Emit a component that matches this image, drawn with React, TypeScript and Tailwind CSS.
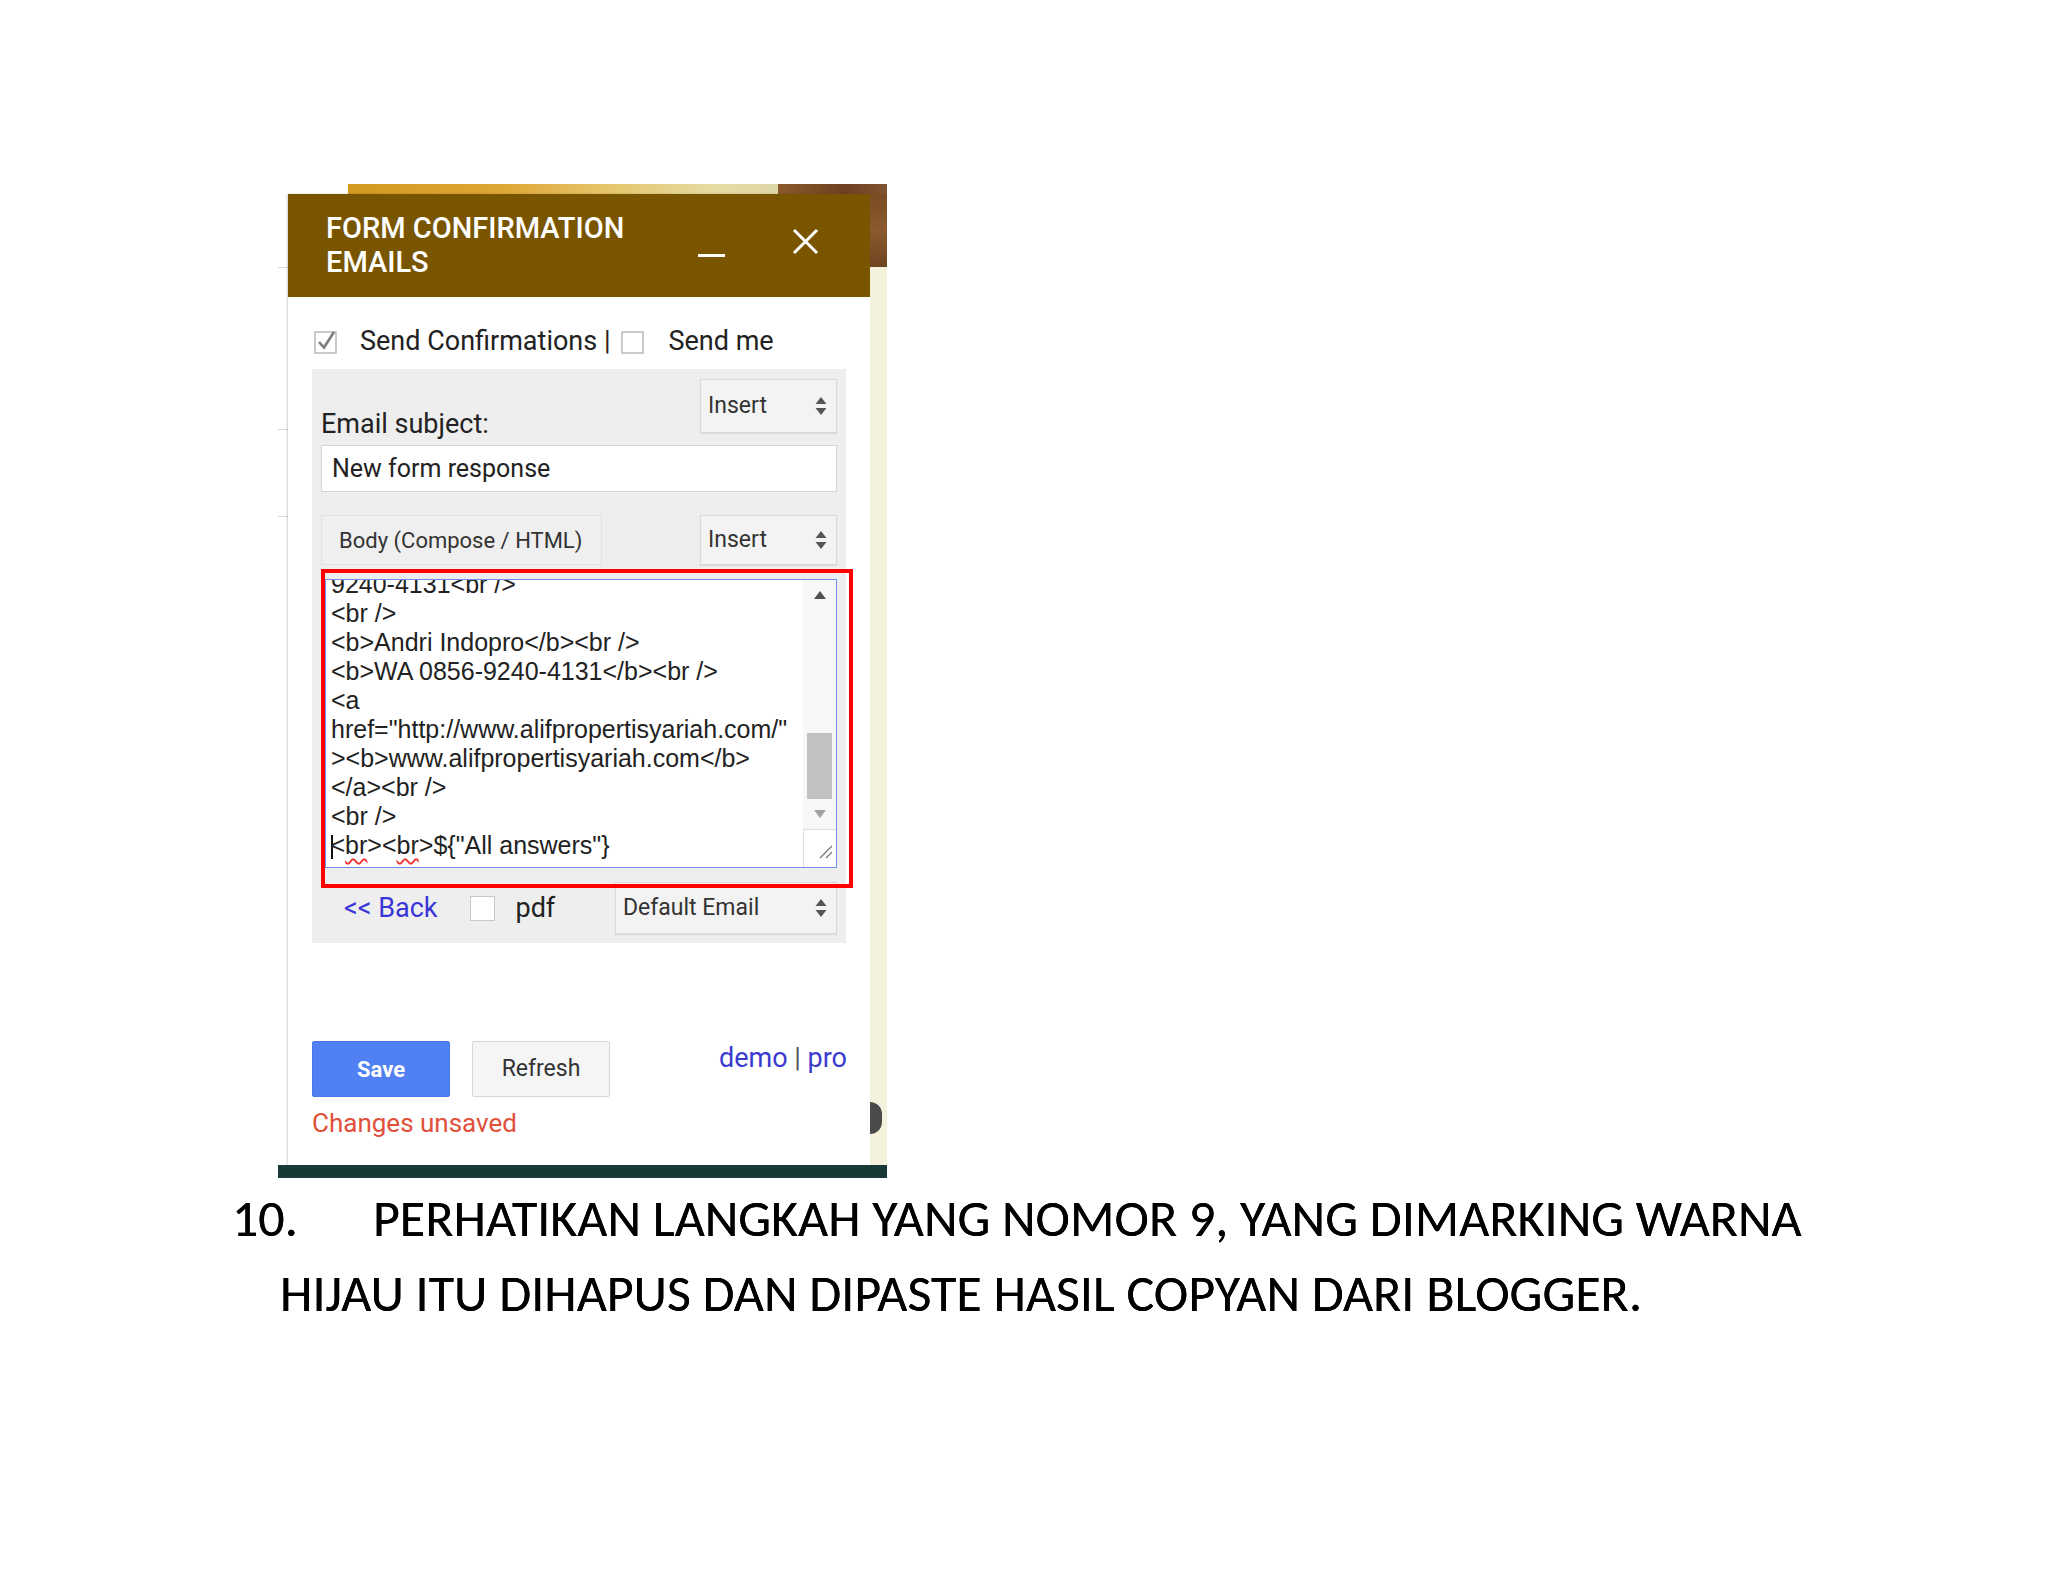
import React from "react";

function UpDown() {
  return (
    <svg width="12" height="22" viewBox="0 0 12 22" className="shrink-0">
      <path d="M6 2 L11.5 9 L0.5 9 Z" fill="#555" />
      <path d="M0.5 13 L11.5 13 L6 20 Z" fill="#555" />
    </svg>
  );
}

function Select({ label, className }: { label: string; className: string }) {
  return (
    <div
      className={`flex items-center justify-between border border-[#d9d9d9] bg-[#f3f3f3] pl-[7px] pr-[9px] text-[23px] text-[#333] shadow-[0_1px_1px_rgba(0,0,0,0.08)] ${className}`}
    >
      <span>{label}</span>
      <UpDown />
    </div>
  );
}

function CheckBox({ checked }: { checked?: boolean }) {
  return (
    <svg width="25" height="25" viewBox="0 0 25 25" className="shrink-0">
      <rect x="1" y="3" width="21" height="21" fill="#fff" stroke="#b9b9b9" strokeWidth="1.5" />
      {checked && (
        <path d="M5 13 L10 18.5 L20 3" fill="none" stroke="#7d7d7d" strokeWidth="2.6" />
      )}
    </svg>
  );
}

const lines = [
  "9240-4131<br />",
  "<br />",
  "<b>Andri Indopro</b><br />",
  "<b>WA 0856-9240-4131</b><br />",
  "<a",
  'href="http://www.alifpropertisyariah.com/"',
  "><b>www.alifpropertisyariah.com</b>",
  "</a><br />",
  "<br />",
];

function Squiggle({ children }: { children: React.ReactNode }) {
  return (
    <span className="underline decoration-wavy decoration-[#e33] decoration-[1.5px] underline-offset-[4px]">
      {children}
    </span>
  );
}

export default function App() {
  return (
    <div className="min-h-[1582px] w-[2048px] bg-white font-['Roboto',sans-serif] text-[#333]">
      <div className="pl-[278px] pt-[184px]">
        {/* screenshot */}
        <div className="flex w-[609px] flex-col">
          <div className="flex h-[10px]">
            <div className="w-[70px]" />
            <div className="w-[430px] bg-[linear-gradient(90deg,#d39a20_0%,#dea634_35%,#e6c56a_60%,#e6dca4_85%,#ddd6a6_100%)]" />
            <div className="w-[109px] bg-[linear-gradient(90deg,#8a5a2c,#6e4220_60%,#7f5230)]" />
          </div>
          <div className="flex h-[971px]">
            {/* left gutter */}
            <div className="flex w-[10px] flex-col">
              <div className="h-[73px]" />
              <div className="h-px bg-[#d9d9d9]" />
              <div className="h-[161px]" />
              <div className="h-px bg-[#d9d9d9]" />
              <div className="h-[86px]" />
              <div className="h-px bg-[#d9d9d9]" />
            </div>

            {/* dialog */}
            <div className="flex w-[582px] flex-col bg-white shadow-[-1px_0_2px_rgba(0,0,0,0.18)]">
              <div className="flex h-[103px] items-start bg-[#7a5500] pl-[38px] pt-[17px] text-white">
                <div className="w-[372px] text-[29px] font-medium leading-[34px]">
                  FORM CONFIRMATION
                  <br />
                  EMAILS
                </div>
                <div className="mt-[43px] h-[3px] w-[27px] bg-white" />
                <svg width="27" height="27" viewBox="0 0 27 27" className="ml-[67px] mt-[17px]">
                  <path d="M2 2 L25 25 M25 2 L2 25" stroke="#fff" strokeWidth="3" />
                </svg>
              </div>

              <div className="flex flex-col px-[24px]">
                <div className="mt-[31px] flex h-[26px] items-center pl-[2px] text-[27px] text-[#222]">
                  <CheckBox checked />
                  <span className="ml-[21px]">Send Confirmations |</span>
                  <span className="ml-[11px]">
                    <CheckBox />
                  </span>
                  <span className="ml-[22px]">Send me</span>
                </div>

                {/* gray panel */}
                <div className="relative mt-[15px] flex h-[574px] flex-col bg-[#eeeeee] px-[9px] pt-[10px]">
                  <div className="flex h-[54px] items-end justify-between">
                    <span className="-mb-[6px] text-[27px] leading-[30px] text-[#222]">Email subject:</span>
                    <Select label="Insert" className="h-[54px] w-[137px] self-start" />
                  </div>
                  <div className="mt-[12px] flex h-[47px] items-center border border-[#d4d4d4] bg-white pl-[10px] text-[25px] text-[#222]">
                    New form response
                  </div>
                  <div className="mt-[23px] flex h-[50px] justify-between">
                    <div className="flex w-[281px] items-center border border-[#e2e2e2] bg-[#efefef] pl-[17px] text-[22px] text-[#333]">
                      Body (Compose / HTML)
                    </div>
                    <Select label="Insert" className="h-[50px] w-[137px]" />
                  </div>

                  {/* textarea */}
                  <div className="relative ml-[4px] mt-[14px] flex h-[289px] w-[512px] overflow-hidden border border-[#6f8ff0] bg-white">
                    <div className="flex-1 overflow-hidden pl-[5px] font-['Liberation_Sans',sans-serif] text-[25px] leading-[29px] text-[#222]">
                      <div className="-mt-[10px]">
                        {lines.map((l, i) => (
                          <div key={i} className="whitespace-nowrap">
                            {l}
                          </div>
                        ))}
                        <div className="flex whitespace-nowrap">
                          <span className="mr-[-2px] mt-[4px] h-[24px] w-[1.5px] bg-[#111]" />
                          <span>
                            &lt;<Squiggle>br</Squiggle>&gt;&lt;<Squiggle>br</Squiggle>&gt;${"{"}"All answers"{"}"}
                          </span>
                        </div>
                      </div>
                    </div>
                    <div className="flex w-[33px] flex-col bg-[#f7f7f7]">
                      <div className="flex h-[30px] items-center justify-center">
                        <svg width="12" height="8" viewBox="0 0 12 8">
                          <path d="M6 0 L12 8 L0 8 Z" fill="#505050" />
                        </svg>
                      </div>
                      <div className="h-[123px]" />
                      <div className="mx-auto h-[66px] w-[25px] bg-[#c1c1c1]" />
                      <div className="flex h-[30px] items-center justify-center">
                        <svg width="12" height="8" viewBox="0 0 12 8">
                          <path d="M0 0 L12 0 L6 8 Z" fill="#a3a3a3" />
                        </svg>
                      </div>
                      <div className="flex-1 border-l border-t border-[#dedede] bg-white">
                        <svg width="32" height="31" viewBox="0 0 32 31">
                          <path d="M16 28 L28 16 M22 28 L28 22" stroke="#777" strokeWidth="1.3" />
                        </svg>
                      </div>
                    </div>
                  </div>

                  <div className="mt-[14px] flex h-[52px] items-center">
                    <span className="ml-[23px] text-[27px] text-[#3a35d8]">&lt;&lt; Back</span>
                    <span className="ml-[33px] h-[25px] w-[25px] border border-[#c8c8c8] bg-white" />
                    <span className="ml-[20px] text-[27px] text-[#222]">pdf</span>
                    <Select label="Default Email" className="ml-auto h-[52px] w-[222px]" />
                  </div>

                  {/* annotation */}
                  <div className="pointer-events-none absolute left-[9px] top-[200px] h-[319px] w-[532px] border-[4px] border-[#ff0000]" />
                </div>

                <div className="mt-[98px] flex items-start">
                  <button className="h-[56px] w-[138px] rounded-[2px] border border-[#4a78e8] bg-[#5080f2] text-[22px] font-bold text-white">
                    Save
                  </button>
                  <button className="ml-[22px] h-[56px] w-[138px] rounded-[2px] border border-[#d6d6d6] bg-[#f5f5f5] text-[23px] text-[#333]">
                    Refresh
                  </button>
                  <div className="ml-auto mr-[-1px] mt-[2px] text-[27px] leading-[30px]">
                    <span className="text-[#3b3bd0]">demo</span>
                    <span className="text-[#555]"> | </span>
                    <span className="text-[#3b3bd0]">pro</span>
                  </div>
                </div>
                <div className="mt-[11px] text-[26px] leading-[30px] text-[#e0503a]">Changes unsaved</div>
              </div>
            </div>

            {/* right strip */}
            <div className="flex w-[17px] flex-col">
              <div className="h-[73px] bg-[linear-gradient(180deg,#7a4c24,#8b5a2e_50%,#6e4421)]" />
              <div className="flex-1 bg-[#f4f2dc]">
                <div className="mt-[835px] h-[32px] w-[12px] rounded-r-full bg-[#4a4a4a]" />
              </div>
            </div>
          </div>
          <div className="h-[13px] bg-[#173a39]" />
        </div>
      </div>

      <div className="mt-[3px] pl-[232px] font-['Carlito','Liberation_Sans_Narrow','DejaVu_Sans_Condensed',sans-serif] text-[52px] leading-[75px] text-black [text-shadow:0_0_0.6px_#000]">
        <div className="flex whitespace-nowrap">
          <span className="w-[141px]">10.</span>
          <span>PERHATIKAN LANGKAH YANG NOMOR 9, YANG DIMARKING WARNA</span>
        </div>
        <div className="whitespace-nowrap pl-[48px]">HIJAU ITU DIHAPUS DAN DIPASTE HASIL COPYAN DARI BLOGGER.</div>
      </div>
    </div>
  );
}
